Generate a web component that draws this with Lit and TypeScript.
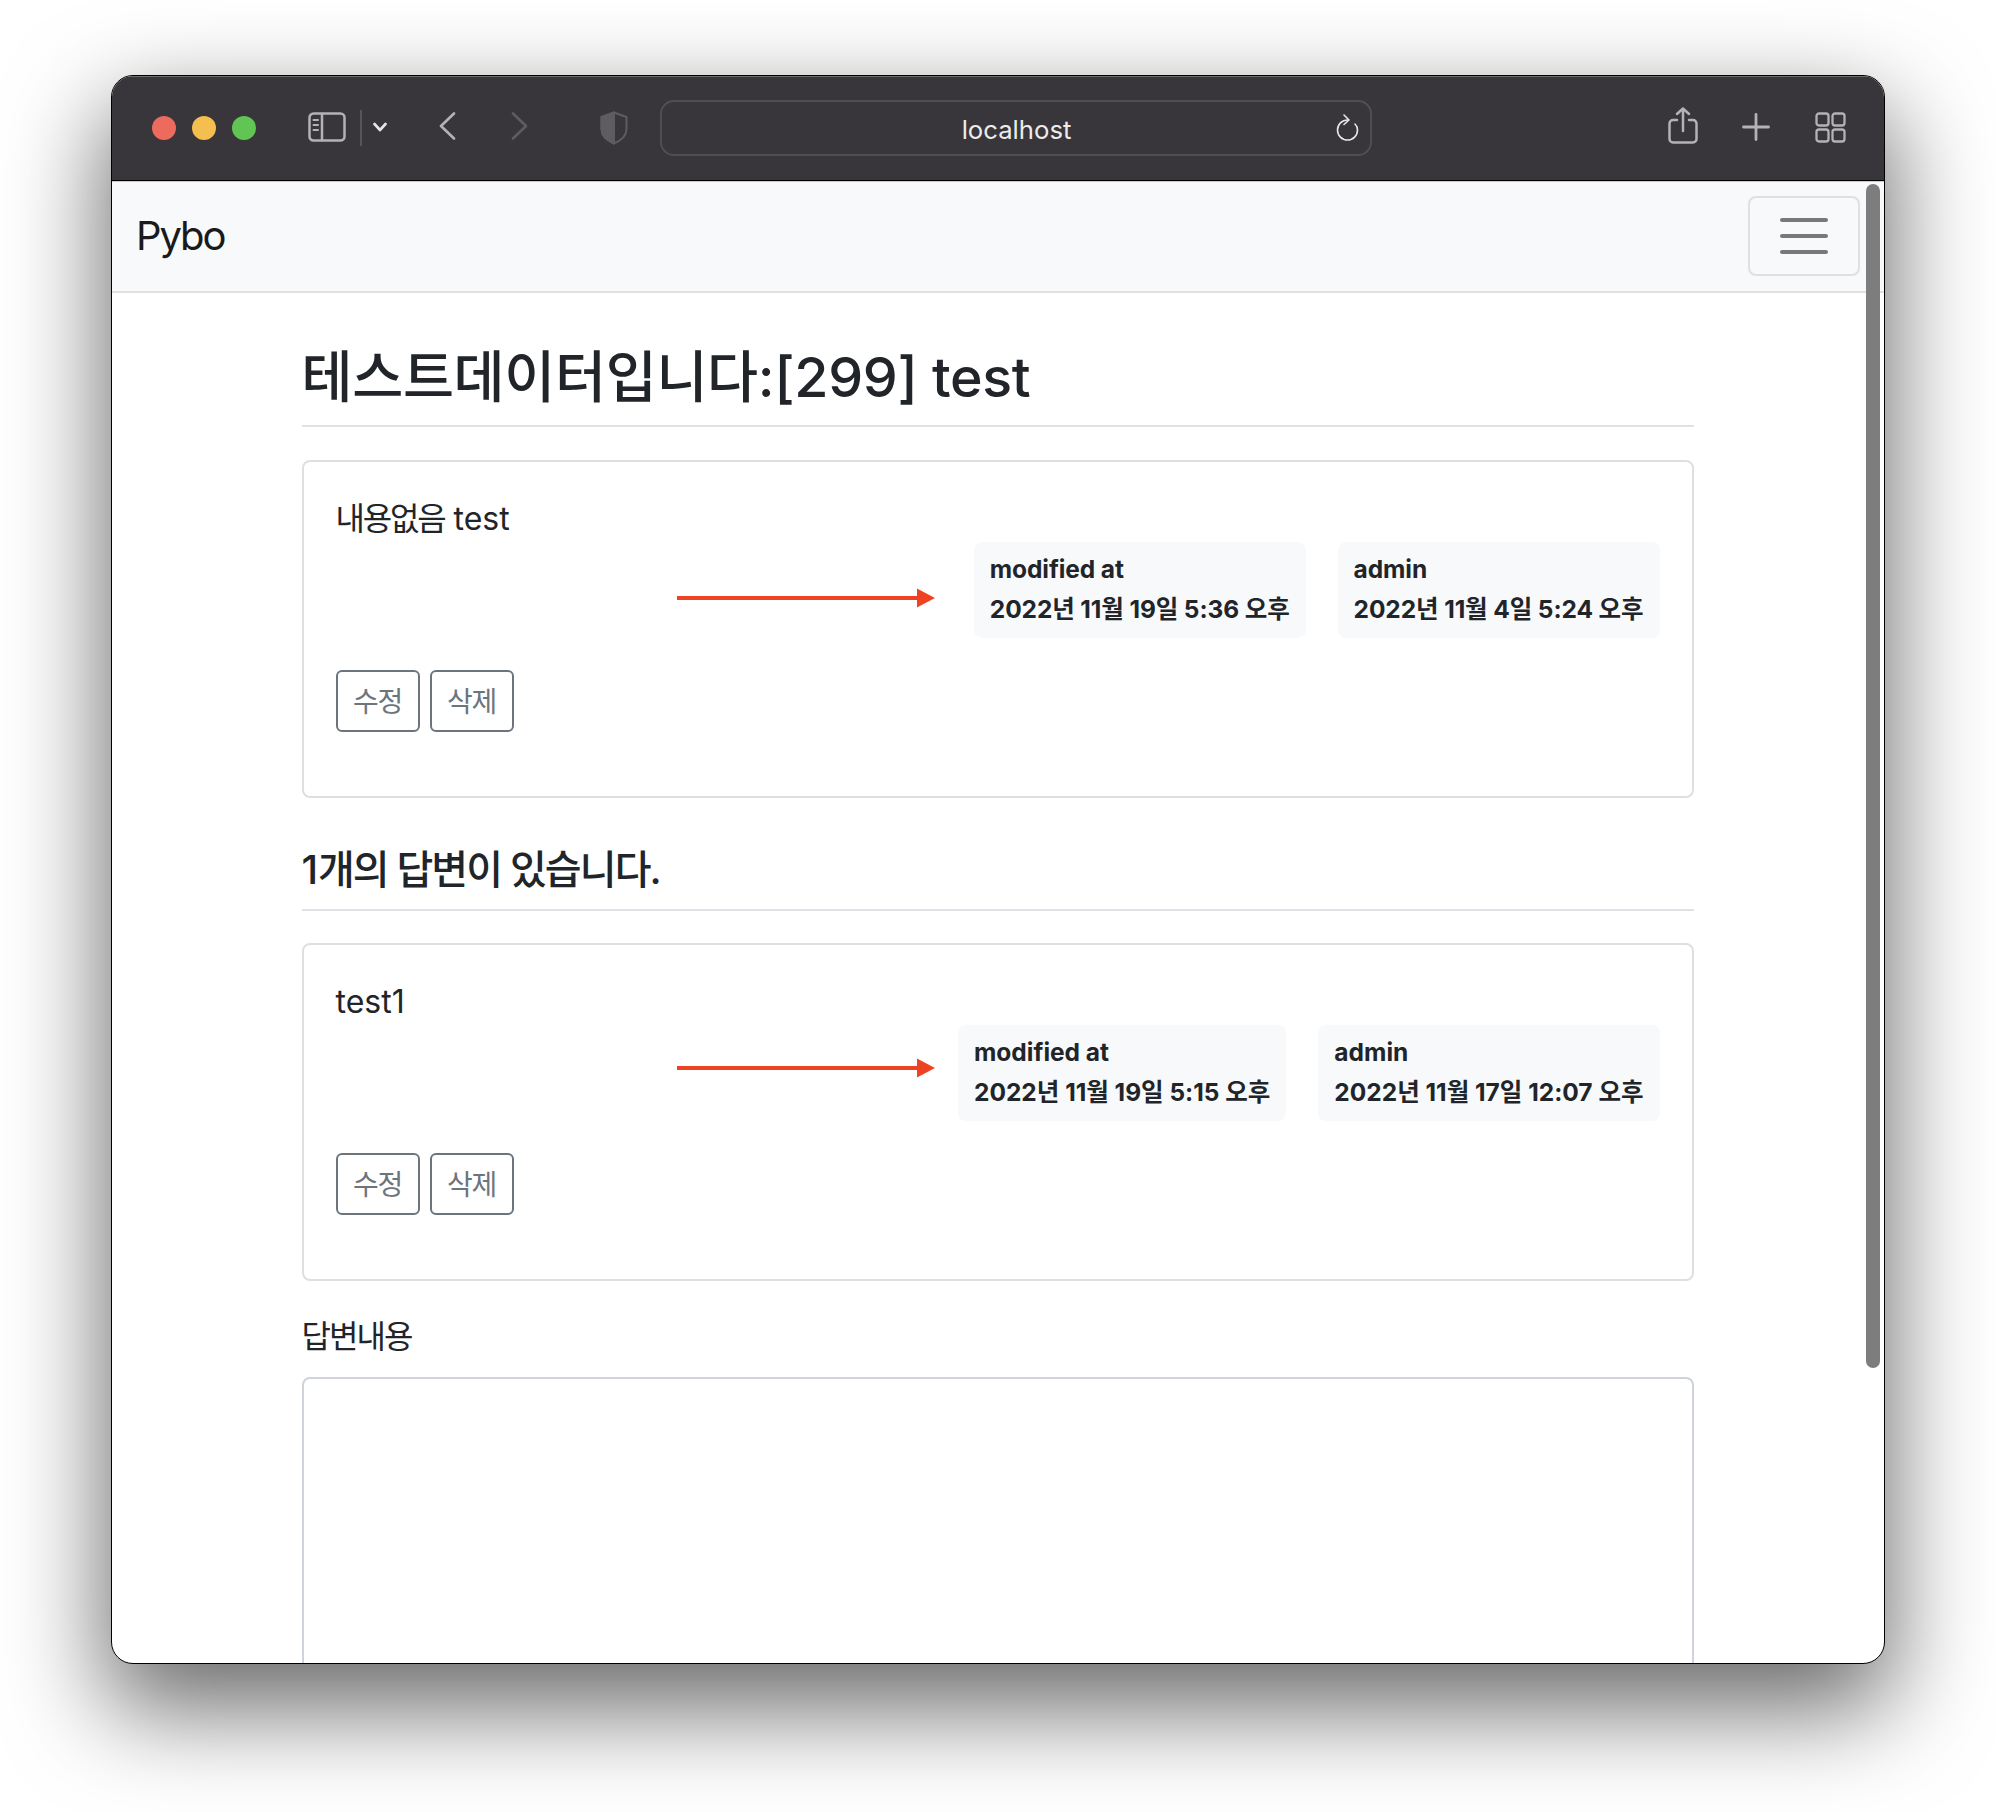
import { LitElement, html, css } from "lit";
import { customElement } from "lit/decorators.js";

const arrow = (top: number) => html`<svg class="arrow" style="top:${top}px" width="258" height="20" viewBox="0 0 258 20"><path d="M0 10H241" stroke="#ee4322" stroke-width="4"/><path d="M240 0.5L258 10L240 19.5Z" fill="#ee4322"/></svg>`;

const post = (body: unknown, a: string, b: string, top: number, tight = false) => html`
  <section class="card ${tight ? "tight" : ""}">
    <div class="text">${body}</div>
    <div class="meta">
      <div class="badge"><div>modified at</div><div>${a}</div></div>
      <div class="badge"><div>admin</div><div>${b}</div></div>
    </div>
    <div class="actions"><a class="btn">수정</a><a class="btn">삭제</a></div>
    ${arrow(top)}
  </section>`;

@customElement("app-root")
export class AppRoot extends LitElement {
  static styles = css`
    :host { display: block; width: 1996px; height: 1812px; background: #fff; overflow: hidden;
      font-family: Inter, "Noto Sans CJK KR", sans-serif; color: #212529; }
    .window { box-sizing: border-box; margin: 75px 0 0 111px; width: 1774px; height: 1589px; border: 1.5px solid #000;
      border-radius: 22px; overflow: hidden; position: relative; background: #fff;
      box-shadow: 0 40px 98px 6px rgba(0,0,0,.58); }
    .toolbar { box-sizing: border-box; height: 105px; background: #38363b; display: flex; align-items: flex-start;
      border-top: 1.5px solid #6e6d70; border-bottom: 1.5px solid #000; position: relative; }
    .toolbar > * { flex: none; }
    .dot { width: 24px; height: 24px; border-radius: 50%; margin-top: 39px; }
    .red { background: #ed6a5f; margin-left: 40px; }
    .yellow { background: #f5bf4f; margin-left: 16px; }
    .green { background: #61c554; margin-left: 16px; }
    svg.ic { fill: none; stroke-linecap: round; stroke-linejoin: round; }
    .i-side { margin: 35px 0 0 52px; }
    .i-div { width: 1.5px; height: 36px; background: #57555a; margin: 33px 0 0 14px; }
    .i-chev { margin: 45px 0 0 11px; }
    .i-back { margin: 35px 0 0 52px; }
    .i-fwd { margin: 35px 0 0 55px; }
    .i-shield { margin: 34px 0 0 72px; }
    .url { box-sizing: border-box; width: 712px; height: 56px; margin: 23px 0 0 32px; border: 2px solid #504e53; border-radius: 14px;
      display: flex; align-items: center; justify-content: center; position: relative; color: #ececec; font-size: 25.7px; padding: 3px 0 0 2px; }
    .i-reload { position: absolute; right: 11px; top: 12px; }
    .i-share { margin: 30px 0 0 296px; }
    .i-plus { margin: 36px 0 0 44px; }
    .i-grid { margin: 35px 0 0 45px; }
    .nav { box-sizing: border-box; height: 112px; background: #f8f9fa; border-bottom: 2px solid #dfe0e1; display: flex;
      align-items: center; justify-content: space-between; padding: 0 24px 2px 24px; border-top: 1.5px solid #c9cbcd; }
    .brand { font-size: 40px; color: #1a1a1c; letter-spacing: -2.1px; }
    .toggler { box-sizing: border-box; width: 112px; height: 80px; border: 2px solid #dfe0e1; border-radius: 8px; display: flex;
      flex-direction: column; align-items: center; justify-content: center; gap: 12px; }
    .toggler i { display: block; width: 48px; height: 4px; border-radius: 2px; background: #78797a; }
    .scroll { position: absolute; right: 4px; top: 108px; width: 14px; height: 1184px; border-radius: 7px; background: #7d7d7d; }
    main { box-sizing: border-box; width: 1392px; margin: 0 0 0 189.5px; }
    h2 { margin: 0; padding: 51.2px 0 15px; font-size: 55.5px; font-weight: 500; line-height: 66px; border-bottom: 2px solid #dee2e6; letter-spacing: -0.36px; }
    h5 { margin: 48px 0 0; padding: 0 0 15px; font-size: 40px; font-weight: 500; line-height: 48px; border-bottom: 2px solid #dee2e6; letter-spacing: -0.2px; }
    .ko { letter-spacing: -2.2px; }
    h5 .ko { letter-spacing: -1.9px; }
    .card { box-sizing: border-box; position: relative; margin-top: 33px; height: 338px; padding: 32px; border: 2px solid #dfdfdf; border-radius: 8px; }
    h5 + .card { margin-top: 32px; }
    .tight .badge { letter-spacing: -0.1px; }
    .text { font-size: 32px; line-height: 48px; padding-top: 1px; margin-bottom: -1px; }
    .meta { display: flex; justify-content: flex-end; gap: 32px; }
    .badge { padding: 7px 16px 9px; background: #f8f9fa; border-radius: 8px; font-size: 24.5px; font-weight: 700; line-height: 40px; }
    .actions { display: flex; gap: 10px; margin-top: 32px; }
    .btn { box-sizing: border-box; height: 62px; width: 84px; padding-bottom: 2px; border: 2px solid #6c757d; border-radius: 6px; color: #6c757d; font-size: 28px;
      display: flex; align-items: center; justify-content: center; letter-spacing: -1.2px; }
    .arrow { position: absolute; left: 373px; }
    label { display: block; margin-top: 32px; font-size: 32px; line-height: 48px; letter-spacing: -1.9px; }
    .area { box-sizing: border-box; margin-top: 16px; height: 400px; border: 2px solid #ced4da; border-radius: 8px; }
  `;

  render() {
    return html`
      <div class="window">
        <div class="toolbar">
          <span class="dot red"></span><span class="dot yellow"></span><span class="dot green"></span>
          <svg class="ic i-side" width="38" height="30" viewBox="0 0 38 30" stroke="#b3b2b5" stroke-width="2.5"><rect x="1.5" y="1.5" width="35" height="27" rx="4"/><path d="M14 2V28"/><path d="M5.5 8H10M5.5 13H10M5.5 18H10" stroke-width="2"/></svg>
          <span class="i-div"></span>
          <svg class="ic i-chev" width="14" height="10" viewBox="0 0 14 10" stroke="#e6e6e6" stroke-width="2.6"><path d="M1.5 2L7 8L12.5 2"/></svg>
          <svg class="ic i-back" width="17" height="28" viewBox="0 0 17 28" stroke="#b3b2b5" stroke-width="2.6"><path d="M15 1.5L2 14L15 26.5"/></svg>
          <svg class="ic i-fwd" width="17" height="28" viewBox="0 0 17 28" stroke="#5e5c61" stroke-width="2.6"><path d="M2 1.5L15 14L2 26.5"/></svg>
          <svg class="ic i-shield" width="28" height="34" viewBox="0 0 28 34"><path d="M14 1.5L26.5 6V18C26.5 25 20 30 14 32.5C8 30 1.5 25 1.5 18V6Z" stroke="#5e5c61" stroke-width="2"/><path d="M14 1.5V32.5C8 30 1.5 25 1.5 18V6Z" fill="#5e5c61" stroke="#5e5c61" stroke-width="2"/></svg>
          <div class="url">localhost
            <svg class="ic i-reload" width="23" height="27" viewBox="0 0 23 27" stroke="#e6e6e6" stroke-width="1.6"><path d="M11.5 6A10 10 0 1 0 21.5 16C21.5 13.5 20.5 11.500 19 10"/><path d="M8 1L13 6L8 10.5"/></svg>
          </div>
          <svg class="ic i-share" width="30" height="37" viewBox="0 0 30 37" stroke="#b3b2b5" stroke-width="2.5"><path d="M9 13H5A3.5 3.5 0 0 0 1.5 16.5V32A3.5 3.5 0 0 0 5 35.5H25A3.5 3.5 0 0 0 28.5 32V16.5A3.5 3.5 0 0 0 25 13H21"/><path d="M15 24V2M9 7L15 1.5L21 7"/></svg>
          <svg class="ic i-plus" width="28" height="28" viewBox="0 0 28 28" stroke="#b3b2b5" stroke-width="2.8"><path d="M14 1.5V26.5M1.5 14H26.5"/></svg>
          <svg class="ic i-grid" width="31" height="31" viewBox="0 0 31 31" stroke="#b3b2b5" stroke-width="2.3"><rect x="1.5" y="1.5" width="12" height="12" rx="2.5"/><rect x="17.5" y="1.5" width="12" height="12" rx="2.5"/><rect x="1.5" y="17.5" width="12" height="12" rx="2.5"/><rect x="17.5" y="17.5" width="12" height="12" rx="2.5"/></svg>
        </div>
        <nav class="nav"><span class="brand">Pybo</span><span class="toggler"><i></i><i></i><i></i></span></nav>
        <main>
          <h2>테스트데이터입니다:[299] test</h2>
          ${post(html`<span class="ko">내용없음</span> test`, "2022년 11월 19일 5:36 오후", "2022년 11월 4일 5:24 오후", 126, true)}
          <h5>1<span class="ko">개의 답변이 있습니다</span>.</h5>
          ${post("test1", "2022년 11월 19일 5:15 오후", "2022년 11월 17일 12:07 오후", 113)}
          <label>답변내용</label>
          <div class="area"></div>
        </main>
        <span class="scroll"></span>
      </div>
    `;
  }
}
